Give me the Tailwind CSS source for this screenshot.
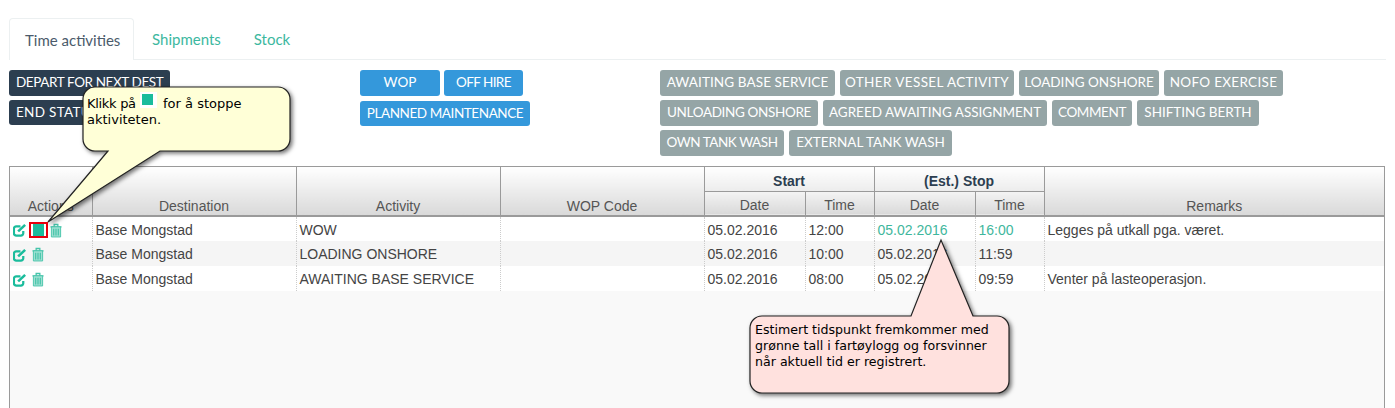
<!DOCTYPE html>
<html lang="en">
<head>
    <meta charset="UTF-8">
    <meta name="viewport" content="width=device-width, initial-scale=1.0">
    <title>Time activities</title>
    <script src="https://cdn.jsdelivr.net/npm/@tailwindcss/browser@4"></script>
</head>
<body class="relative h-[408px] w-[1395px] overflow-hidden bg-white font-['Lato',sans-serif]">

    <!-- Tabs -->
    <div class="mx-[9px] mt-[18px] flex h-[42px] border-b border-[#ecf0f1] text-[15px]">
        <div class="h-[42px] w-[125px] rounded-t border border-b-0 border-[#ecf0f1] bg-white pl-[15px] pt-[10px] text-[#4b5b6b]">Time activities</div>
        <div class="pl-[18px] pt-[10px] text-[#3cb89f]">Shipments</div>
        <div class="pl-[33px] pt-[10px] text-[#3cb89f]">Stock</div>
    </div>

    <!-- Activity buttons -->
    <div class="mt-[10px] flex h-[96px] whitespace-nowrap pl-[9px] text-[13.5px] text-white">
        <div class="flex w-[351px] flex-col items-start gap-y-[4px]">
            <div class="flex h-[26px] w-[161px] items-center rounded-[3px] bg-[#2c3e50] pb-[1px] pl-[7px] tracking-[-0.4px]">DEPART FOR NEXT DEST</div>
            <div class="flex h-[25px] w-[100px] items-center rounded-[3px] bg-[#2c3e50] pb-[1px] pl-[7px] tracking-[0.3px]">END STATUS</div>
        </div>
        <div class="w-[300px]">
            <div class="flex gap-x-[4px]">
                <div class="flex h-[26px] w-[80px] items-center justify-center rounded-[3px] bg-[#3498db] pb-[1px]">WOP</div>
                <div class="flex h-[26px] w-[79px] items-center justify-center rounded-[3px] bg-[#3498db] pb-[1px] tracking-[-0.6px]">OFF HIRE</div>
            </div>
            <div class="mt-[5px] flex h-[25px] w-[170px] items-center justify-center rounded-[3px] bg-[#3498db] pb-[1px] tracking-[-0.42px]">PLANNED MAINTENANCE</div>
        </div>
        <div class="flex flex-col gap-y-[4px]">
            <div class="flex gap-x-[5px]">
                <div class="flex h-[26px] w-[175px] items-center justify-center rounded-[3px] bg-[#95a5a6] pb-[1px] tracking-[0.1px]">AWAITING BASE SERVICE</div>
                <div class="flex h-[26px] w-[174px] items-center justify-center rounded-[3px] bg-[#95a5a6] pb-[1px] tracking-[0.4px]">OTHER VESSEL ACTIVITY</div>
                <div class="flex h-[26px] w-[140px] items-center justify-center rounded-[3px] bg-[#95a5a6] pb-[1px]">LOADING ONSHORE</div>
                <div class="flex h-[26px] w-[119px] items-center justify-center rounded-[3px] bg-[#95a5a6] pb-[1px] tracking-[0.3px]">NOFO EXERCISE</div>
            </div>
            <div class="flex gap-x-[5px]">
                <div class="flex h-[26px] w-[158px] items-center justify-center rounded-[3px] bg-[#95a5a6] pb-[1px] tracking-[-0.35px]">UNLOADING ONSHORE</div>
                <div class="flex h-[26px] w-[224px] items-center justify-center rounded-[3px] bg-[#95a5a6] pb-[1px]">AGREED AWAITING ASSIGNMENT</div>
                <div class="flex h-[26px] w-[80px] items-center justify-center rounded-[3px] bg-[#95a5a6] pb-[1px] tracking-[-0.4px]">COMMENT</div>
                <div class="flex h-[26px] w-[122px] items-center justify-center rounded-[3px] bg-[#95a5a6] pb-[1px]">SHIFTING BERTH</div>
            </div>
            <div class="flex gap-x-[5px]">
                <div class="flex h-[26px] w-[124px] items-center justify-center rounded-[3px] bg-[#95a5a6] pb-[1px] tracking-[-0.45px]">OWN TANK WASH</div>
                <div class="flex h-[26px] w-[163px] items-center justify-center rounded-[3px] bg-[#95a5a6] pb-[1px]">EXTERNAL TANK WASH</div>
            </div>
        </div>
    </div>

    <!-- Activity table -->
    <div class="ml-[9px] h-[242px] w-[1376px] border-x border-t border-[#9a9a9a] bg-[#f9f9f9] font-['Liberation_Sans',sans-serif] text-[14px] text-[#444]">
        <table class="w-[1374px] table-fixed border-collapse">
            <colgroup>
                <col class="w-[82px]"><col class="w-[204px]"><col class="w-[204px]"><col class="w-[204px]">
                <col class="w-[101px]"><col class="w-[69px]"><col class="w-[101px]"><col class="w-[69px]"><col>
            </colgroup>
            <thead class="text-[#555]">
                <tr class="h-[24px]">
                    <th rowspan="2" class="border-b-2 border-[#9a9a9a] bg-gradient-to-b from-white to-[#d9d9d9] align-bottom font-normal leading-[18px]">Actions</th>
                    <th rowspan="2" class="border-b-2 border-l border-[#9a9a9a] bg-gradient-to-b from-white to-[#d9d9d9] align-bottom font-normal leading-[18px]">Destination</th>
                    <th rowspan="2" class="border-b-2 border-l border-[#9a9a9a] bg-gradient-to-b from-white to-[#d9d9d9] align-bottom font-normal leading-[18px]">Activity</th>
                    <th rowspan="2" class="border-b-2 border-l border-[#9a9a9a] bg-gradient-to-b from-white to-[#d9d9d9] align-bottom font-normal leading-[18px]">WOP Code</th>
                    <th colspan="2" class="border-b border-l border-[#9a9a9a] bg-gradient-to-b from-white to-[#ececec] pt-[4px] font-bold leading-[18px] text-[#2c3e50]">Start</th>
                    <th colspan="2" class="border-b border-l border-[#9a9a9a] bg-gradient-to-b from-white to-[#ececec] pt-[4px] font-bold leading-[18px] text-[#2c3e50]">(Est.) Stop</th>
                    <th rowspan="2" class="border-b-2 border-l border-[#9a9a9a] bg-gradient-to-b from-white to-[#d9d9d9] align-bottom font-normal leading-[18px]">Remarks</th>
                </tr>
                <tr class="h-[25px]">
                    <th class="border-b-2 border-l border-[#9a9a9a] bg-gradient-to-b from-[#f4f4f4] to-[#d9d9d9] pt-[3px] font-normal leading-[18px]">Date</th>
                    <th class="border-b-2 border-l border-[#9a9a9a] bg-gradient-to-b from-[#f4f4f4] to-[#d9d9d9] pt-[3px] font-normal leading-[18px]">Time</th>
                    <th class="border-b-2 border-l border-[#9a9a9a] bg-gradient-to-b from-[#f4f4f4] to-[#d9d9d9] pt-[3px] font-normal leading-[18px]">Date</th>
                    <th class="border-b-2 border-l border-[#9a9a9a] bg-gradient-to-b from-[#f4f4f4] to-[#d9d9d9] pt-[3px] font-normal leading-[18px]">Time</th>
                </tr>
            </thead>
            <tbody class="[&_td]:pt-[2px]">
                <tr class="h-[25px] bg-white">
                    <td class="pl-[3px]">
                        <div class="flex items-center">
                            <svg class="h-[14px] w-[14px]" viewBox="0 0 15 14" fill="none" stroke="#1abc9c"><path d="M11 8v2.500a2.500 2.500 0 0 1-2.500 2.500H3.500A2.500 2.500 0 0 1 1 10.500V5.500A2.500 2.500 0 0 1 3.500 3H8" stroke-width="2.400"/><path d="M5.500 8.500L13 1.500" stroke-width="2.800"/></svg>
                            <div class="ml-[6px] h-[12px] w-[11px] bg-[#1abc9c]"></div>
                            <svg class="ml-[6px] h-[15px] w-[12px]" viewBox="0 0 13 15" fill="#9fe0d2" stroke="#45c4aa"><path d="M.5 3.500h12M4.500 3.500V1h4v2.500" fill="none" stroke-width="1.400"/><path d="M1.500 3.500h10v11h-10z"/><path d="M4 5.500v7.500M6.500 5.500v7.500M9 5.500v7.500" stroke-width="1.300"/></svg>
                        </div>
                    </td>
                    <td class="border-l border-dotted border-[#ccc] pl-[3px]">Base Mongstad</td>
                    <td class="border-l border-dotted border-[#ccc] pl-[3px]">WOW</td>
                    <td class="border-l border-dotted border-[#ccc] pl-[3px]"></td>
                    <td class="border-l border-dotted border-[#ccc] pl-[3px]">05.02.2016</td>
                    <td class="border-l border-dotted border-[#ccc] pl-[3px]">12:00</td>
                    <td class="border-l border-dotted border-[#ccc] pl-[3px] text-[#3fb79d]">05.02.2016</td>
                    <td class="border-l border-dotted border-[#ccc] pl-[3px] text-[#3fb79d]">16:00</td>
                    <td class="border-l border-dotted border-[#ccc] pl-[3px]">Legges på utkall pga. været.</td>
                </tr>
                <tr class="h-[25px] bg-[#f5f5f5]">
                    <td class="pl-[3px]">
                        <div class="flex items-center">
                            <svg class="h-[14px] w-[14px]" viewBox="0 0 15 14" fill="none" stroke="#1abc9c"><path d="M11 8v2.500a2.500 2.500 0 0 1-2.500 2.500H3.500A2.500 2.500 0 0 1 1 10.500V5.500A2.500 2.500 0 0 1 3.500 3H8" stroke-width="2.400"/><path d="M5.500 8.500L13 1.500" stroke-width="2.800"/></svg>
                            <svg class="ml-[5px] h-[15px] w-[12px]" viewBox="0 0 13 15" fill="#9fe0d2" stroke="#45c4aa"><path d="M.5 3.500h12M4.500 3.500V1h4v2.500" fill="none" stroke-width="1.400"/><path d="M1.500 3.500h10v11h-10z"/><path d="M4 5.500v7.500M6.500 5.500v7.500M9 5.500v7.500" stroke-width="1.300"/></svg>
                        </div>
                    </td>
                    <td class="border-l border-dotted border-[#ccc] pl-[3px]">Base Mongstad</td>
                    <td class="border-l border-dotted border-[#ccc] pl-[3px]">LOADING ONSHORE</td>
                    <td class="border-l border-dotted border-[#ccc] pl-[3px]"></td>
                    <td class="border-l border-dotted border-[#ccc] pl-[3px]">05.02.2016</td>
                    <td class="border-l border-dotted border-[#ccc] pl-[3px]">10:00</td>
                    <td class="border-l border-dotted border-[#ccc] pl-[3px]">05.02.2016</td>
                    <td class="border-l border-dotted border-[#ccc] pl-[3px]">11:59</td>
                    <td class="border-l border-dotted border-[#ccc] pl-[3px]"></td>
                </tr>
                <tr class="h-[25px] bg-white">
                    <td class="pl-[3px]">
                        <div class="flex items-center">
                            <svg class="h-[14px] w-[14px]" viewBox="0 0 15 14" fill="none" stroke="#1abc9c"><path d="M11 8v2.500a2.500 2.500 0 0 1-2.500 2.500H3.500A2.500 2.500 0 0 1 1 10.500V5.500A2.500 2.500 0 0 1 3.500 3H8" stroke-width="2.400"/><path d="M5.500 8.500L13 1.500" stroke-width="2.800"/></svg>
                            <svg class="ml-[5px] h-[15px] w-[12px]" viewBox="0 0 13 15" fill="#9fe0d2" stroke="#45c4aa"><path d="M.5 3.500h12M4.500 3.500V1h4v2.500" fill="none" stroke-width="1.400"/><path d="M1.500 3.500h10v11h-10z"/><path d="M4 5.500v7.500M6.500 5.500v7.500M9 5.500v7.500" stroke-width="1.300"/></svg>
                        </div>
                    </td>
                    <td class="border-l border-dotted border-[#ccc] pl-[3px]">Base Mongstad</td>
                    <td class="border-l border-dotted border-[#ccc] pl-[3px]">AWAITING BASE SERVICE</td>
                    <td class="border-l border-dotted border-[#ccc] pl-[3px]"></td>
                    <td class="border-l border-dotted border-[#ccc] pl-[3px]">05.02.2016</td>
                    <td class="border-l border-dotted border-[#ccc] pl-[3px]">08:00</td>
                    <td class="border-l border-dotted border-[#ccc] pl-[3px]">05.02.2016</td>
                    <td class="border-l border-dotted border-[#ccc] pl-[3px]">09:59</td>
                    <td class="border-l border-dotted border-[#ccc] pl-[3px]">Venter på lasteoperasjon.</td>
                </tr>
            </tbody>
        </table>
    </div>

    <!-- Callouts drawn over the page -->
    <div class="absolute left-[29px] top-[222px] h-[16px] w-[19px] border-[2px] border-[#e8000d]"></div>
    <svg class="absolute left-0 top-0 h-[408px] w-[1395px] drop-shadow-[2px_2px_2px_rgba(0,0,0,0.55)]" viewBox="0 0 1395 408" fill="none">
        <path d="M95 87H278a12 12 0 0 1 12 12V139a12 12 0 0 1-12 12H160L48 222L108 151H95a12 12 0 0 1-12-12V99a12 12 0 0 1 12-12z" fill="#ffffd7" stroke="#222" stroke-width="1.200"/>
        <path d="M762 316H911L941 240L973 316H997a12 12 0 0 1 12 12V381a12 12 0 0 1-12 12H762a12 12 0 0 1-12-12V328a12 12 0 0 1 12-12z" fill="#ffe1de" stroke="#222" stroke-width="1.200"/>
    </svg>
    <div class="absolute left-[87px] top-[96px] w-[195px] font-['DejaVu_Sans',sans-serif] text-[13px] leading-[16px] text-black">
        <span class="tracking-[-0.3px]">Klikk på</span> <span class="-mt-[4px] mr-[2px] inline-block h-[16px] w-[17px] bg-white p-[2px] align-top"><span class="block h-[11px] w-[11px] bg-[#1abc9c]"></span></span> for å stoppe<br>aktiviteten.
    </div>
    <div class="absolute left-[755px] top-[322px] w-[250px] font-['DejaVu_Sans',sans-serif] text-[12.6px] leading-[16px] text-black">
        Estimert tidspunkt fremkommer med<br>grønne tall i fartøylogg og forsvinner<br>når aktuell tid er registrert.
    </div>
</body>
</html>
